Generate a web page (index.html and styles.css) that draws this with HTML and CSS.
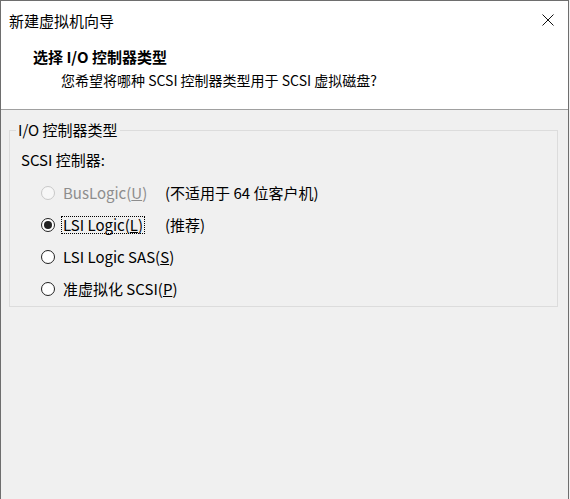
FILE: index.html
```html
<!DOCTYPE html>
<html lang="zh-CN">
<head>
    <meta charset="UTF-8">
    <title>新建虚拟机向导</title>
    <link rel="stylesheet" href="styles.css">
</head>
<body>
    <div class="window">
        <div class="titlebar">
            <span class="title">新建虚拟机向导</span>
            <span class="close">
                <svg width="12" height="12" viewBox="0 0 12 12"><path d="M0.5 0.5 L11.5 11.5 M11.5 0.5 L0.5 11.5" stroke="#111" stroke-width="1" fill="none"/></svg>
            </span>
        </div>
        <div class="header">
            <h1>选择 I/O 控制器类型</h1>
            <p>您希望将哪种 SCSI 控制器类型用于 SCSI 虚拟磁盘?</p>
        </div>
        <div class="content">
            <fieldset class="group">
                <legend>I/O 控制器类型</legend>
                <div class="field-label">SCSI 控制器:</div>
                <div class="options">
                    <div class="radio disabled"><span class="dot"></span><span class="text">BusLogic(<u>U</u>)</span></div>
                    <div class="note">(不适用于 64 位客户机)</div>
                    <div class="radio checked"><span class="dot"></span><span class="text focus">LSI Logic(<u>L</u>)</span></div>
                    <div class="note">(推荐)</div>
                    <div class="radio wide"><span class="dot"></span><span class="text">LSI Logic SAS(<u>S</u>)</span></div>
                    <div class="radio wide"><span class="dot"></span><span class="text">准虚拟化 SCSI(<u>P</u>)</span></div>
                </div>
            </fieldset>
        </div>
    </div>
</body>
</html>
```

FILE: styles.css
```css
/* General */
html {
    background: #f0f0f0;
}

body {
    margin: 0;
    font-family: "Noto Sans CJK SC", sans-serif;
    font-size: 15px;
    color: #000;
}

/* Window frame */
.window {
    width: 567px;
    height: 498px;
    border: 1px solid #6e6e6e;
    border-bottom: none;
    background: #f0f0f0;
    display: flex;
    flex-direction: column;
}

.titlebar {
    height: 38px;
    background: #fff;
    display: flex;
    align-items: center;
    justify-content: space-between;
    padding: 0 14px 0 8px;
}

.title {
    line-height: 20px;
    padding-top: 2px;
}

.close {
    display: flex;
    width: 12px;
    height: 12px;
}

/* Header */
.header {
    background: #fff;
    padding: 8px 0 19px 32px;
    border-bottom: 1px solid #a0a0a0;
}

.header h1 {
    margin: 0;
    font-size: 15px;
    line-height: 20px;
    font-weight: bold;
}

.header p {
    margin: 3px 0 0 28px;
    font-size: 14px;
    line-height: 20px;
}

/* Group box */
.content {
    padding: 10px 10px 0 8px;
}

.group {
    margin: 0;
    border: 1px solid #dcdcdc;
    padding: 10px 11px 1px 11px;
    min-width: 0;
}

.group legend {
    margin-left: -5px;
    padding: 0 2px;
    line-height: 20px;
}

.field-label {
    line-height: 20px;
}

.options {
    margin-top: 7px;
    padding-left: 20px;
    display: grid;
    grid-template-columns: 124px auto;
    grid-auto-rows: 32px;
    align-items: center;
}

.radio {
    display: flex;
    align-items: center;
    gap: 6px;
    white-space: nowrap;
}

.radio.wide {
    grid-column: 1 / span 2;
}

.dot {
    width: 12px;
    height: 12px;
    border: 1px solid #222;
    border-radius: 50%;
    background: #fff;
    display: flex;
    align-items: center;
    justify-content: center;
    flex: none;
}

.radio.checked .dot::after {
    content: "";
    width: 8px;
    height: 8px;
    border-radius: 50%;
    background: #222;
}

.text {
    padding: 0 1px;
    line-height: 16px;
    border: 1px solid transparent;
}

.text.focus {
    border: 1px dotted #000;
}

.radio.disabled .dot {
    border-color: #c8c8c8;
    background: #f7f7f7;
}

.radio.disabled .text {
    color: #8d8d8d;
}

.note {
    line-height: 20px;
    white-space: nowrap;
}
```
